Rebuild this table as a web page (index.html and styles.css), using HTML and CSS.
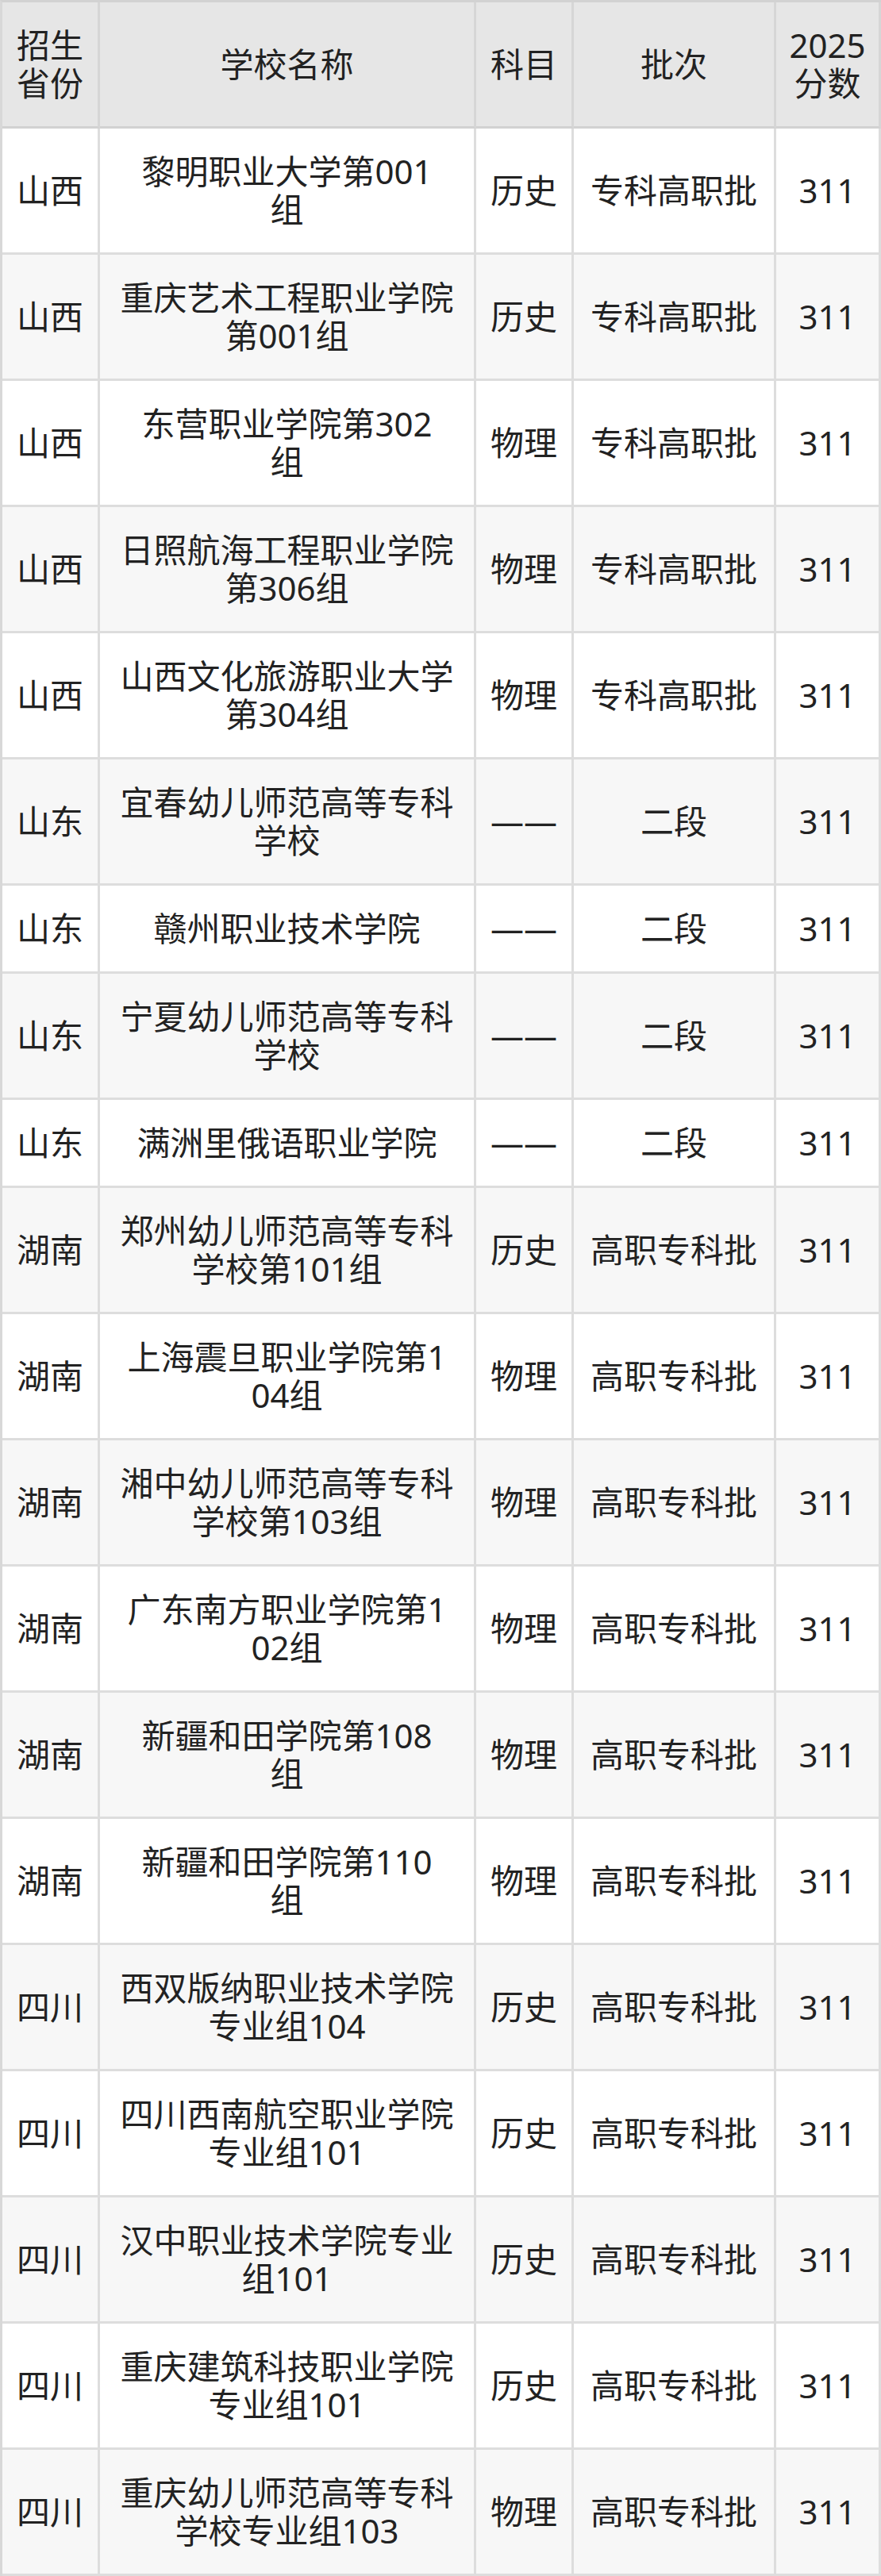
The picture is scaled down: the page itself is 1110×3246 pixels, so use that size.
FILE: index.html
```html
<!DOCTYPE html>
<html lang="zh-CN">
<head>
<meta charset="utf-8">
<title>分数表</title>
<link rel="stylesheet" href="styles.css">
</head>
<body>
<table class="score-table">
  <thead>
    <tr>
      <th class="c-prov">招生<br>省份</th>
      <th class="c-name">学校名称</th>
      <th class="c-subj">科目</th>
      <th class="c-batch">批次</th>
      <th class="c-score">2025<br>分数</th>
    </tr>
  </thead>
  <tbody>
    <tr><td>山西</td><td>黎明职业大学第001<br>组</td><td>历史</td><td>专科高职批</td><td>311</td></tr>
    <tr><td>山西</td><td>重庆艺术工程职业学院<br>第001组</td><td>历史</td><td>专科高职批</td><td>311</td></tr>
    <tr><td>山西</td><td>东营职业学院第302<br>组</td><td>物理</td><td>专科高职批</td><td>311</td></tr>
    <tr><td>山西</td><td>日照航海工程职业学院<br>第306组</td><td>物理</td><td>专科高职批</td><td>311</td></tr>
    <tr><td>山西</td><td>山西文化旅游职业大学<br>第304组</td><td>物理</td><td>专科高职批</td><td>311</td></tr>
    <tr><td>山东</td><td>宜春幼儿师范高等专科<br>学校</td><td>——</td><td>二段</td><td>311</td></tr>
    <tr><td>山东</td><td>赣州职业技术学院</td><td>——</td><td>二段</td><td>311</td></tr>
    <tr><td>山东</td><td>宁夏幼儿师范高等专科<br>学校</td><td>——</td><td>二段</td><td>311</td></tr>
    <tr><td>山东</td><td>满洲里俄语职业学院</td><td>——</td><td>二段</td><td>311</td></tr>
    <tr><td>湖南</td><td>郑州幼儿师范高等专科<br>学校第101组</td><td>历史</td><td>高职专科批</td><td>311</td></tr>
    <tr><td>湖南</td><td>上海震旦职业学院第1<br>04组</td><td>物理</td><td>高职专科批</td><td>311</td></tr>
    <tr><td>湖南</td><td>湘中幼儿师范高等专科<br>学校第103组</td><td>物理</td><td>高职专科批</td><td>311</td></tr>
    <tr><td>湖南</td><td>广东南方职业学院第1<br>02组</td><td>物理</td><td>高职专科批</td><td>311</td></tr>
    <tr><td>湖南</td><td>新疆和田学院第108<br>组</td><td>物理</td><td>高职专科批</td><td>311</td></tr>
    <tr><td>湖南</td><td>新疆和田学院第110<br>组</td><td>物理</td><td>高职专科批</td><td>311</td></tr>
    <tr><td>四川</td><td>西双版纳职业技术学院<br>专业组104</td><td>历史</td><td>高职专科批</td><td>311</td></tr>
    <tr><td>四川</td><td>四川西南航空职业学院<br>专业组101</td><td>历史</td><td>高职专科批</td><td>311</td></tr>
    <tr><td>四川</td><td>汉中职业技术学院专业<br>组101</td><td>历史</td><td>高职专科批</td><td>311</td></tr>
    <tr><td>四川</td><td>重庆建筑科技职业学院<br>专业组101</td><td>历史</td><td>高职专科批</td><td>311</td></tr>
    <tr><td>四川</td><td>重庆幼儿师范高等专科<br>学校专业组103</td><td>物理</td><td>高职专科批</td><td>311</td></tr>
  </tbody>
</table>
</body>
</html>
```
FILE: styles.css
```css
html, body {
  margin: 0;
  padding: 0;
  background: #ffffff;
}

.score-table {
  width: 1110px;
  table-layout: fixed;
  border-collapse: separate;
  border-spacing: 0;
  border-top: 3px solid #d2d2d2;
  border-left: 3px solid #d8d8d8;
  font-family: "Noto Sans", "Noto Sans CJK SC", sans-serif;
  font-size: 42px;
  line-height: 48px;
  color: #222222;
}

.score-table th,
.score-table td {
  box-sizing: border-box;
  padding: 30px 0;
  text-align: center;
  vertical-align: middle;
  white-space: nowrap;
  font-weight: 400;
  border-right: 3px solid #dddddd;
  border-bottom: 3px solid #dddddd;
}

.score-table th {
  background: #e6e6e6;
  border-right-color: #d6d6d6;
  border-bottom-color: #d2d2d2;
}

.score-table tbody tr:nth-child(odd) td {
  background: #ffffff;
}

.score-table tbody tr:nth-child(even) td {
  background: #f7f7f7;
}

.c-prov { width: 123px; }
.c-name { width: 474px; }
.c-subj { width: 123px; }
.c-batch { width: 255px; }
.c-score { width: 132px; }
```
